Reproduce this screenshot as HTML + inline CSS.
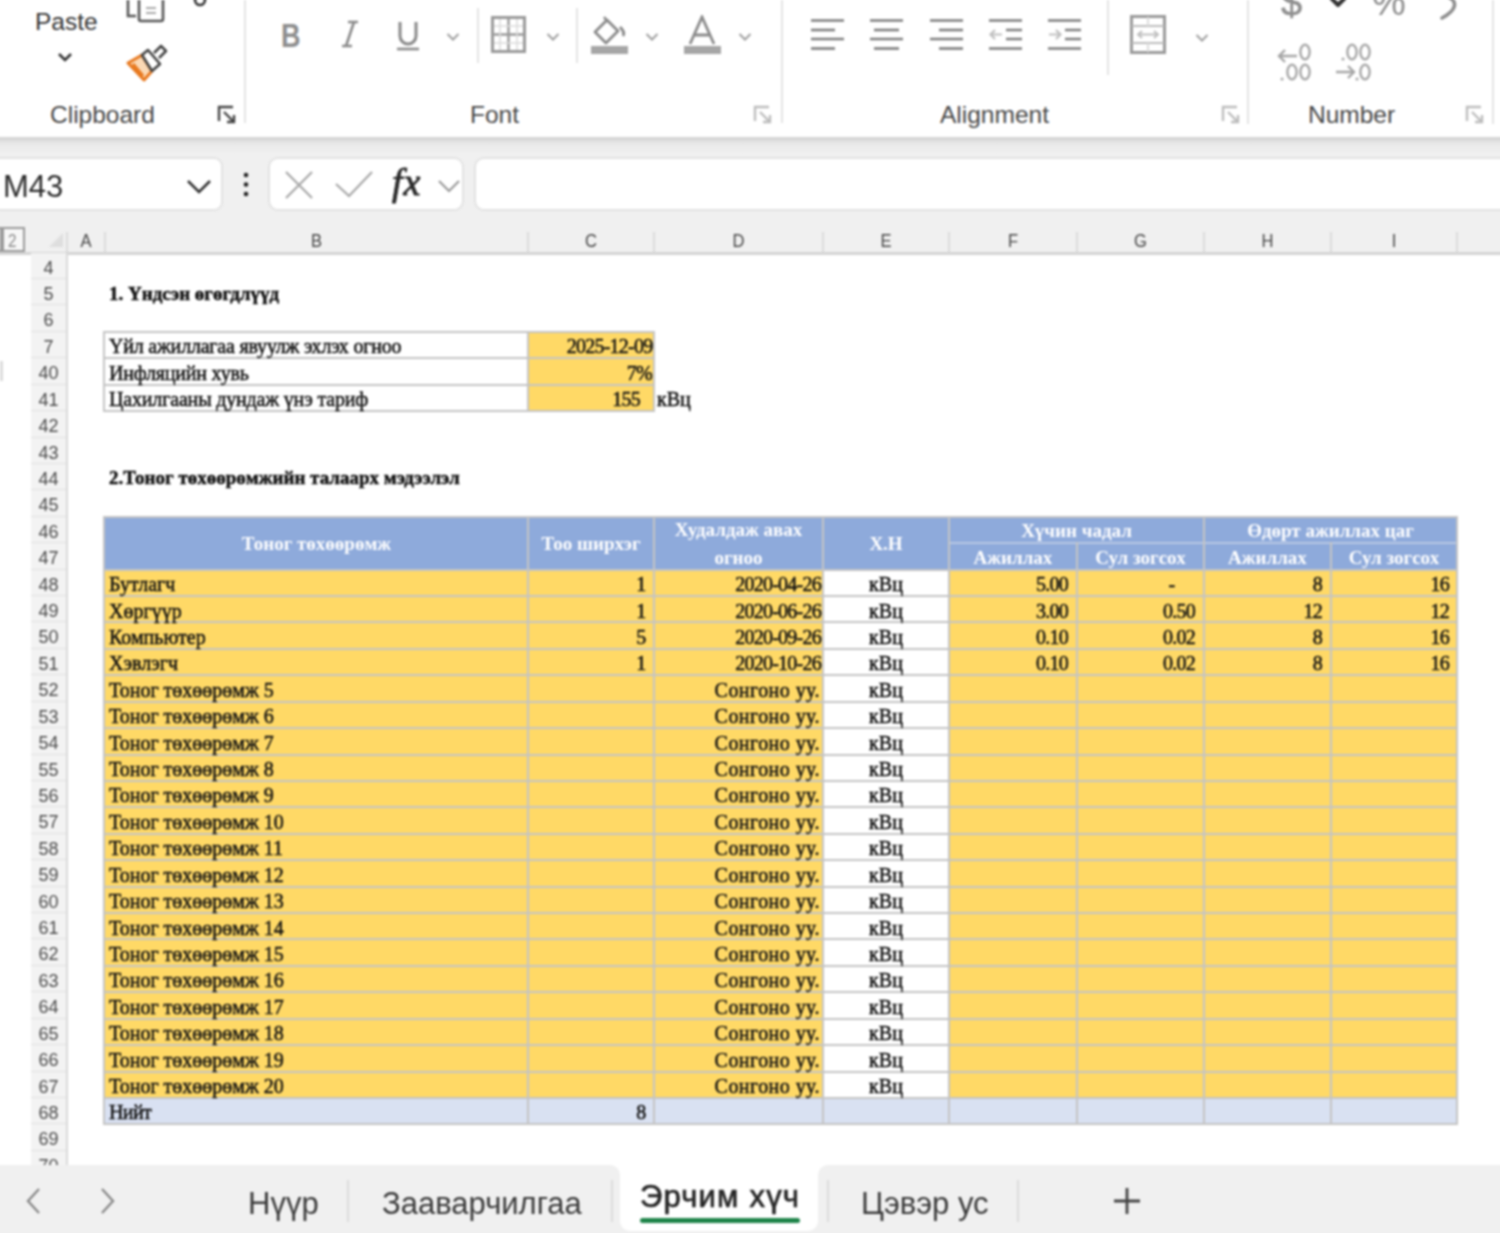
<!DOCTYPE html>
<html><head><meta charset="utf-8"><style>
*{box-sizing:border-box}
html,body{margin:0;padding:0}
body{width:1500px;height:1233px;overflow:hidden;position:relative;background:#f0f0f0;font-family:"Liberation Sans",sans-serif;}
.a{position:absolute}
.t{position:absolute;white-space:nowrap;line-height:1}
.lbl{position:absolute;white-space:nowrap;font-size:24.5px;color:#474747;line-height:1}
.cell{position:absolute;font-family:"Liberation Serif",serif;font-size:20px;color:#111;white-space:nowrap;line-height:26px;padding-top:1.5px;-webkit-text-stroke:0.5px #111;}
.hd{position:absolute;font-family:"Liberation Serif",serif;font-size:19px;font-weight:bold;color:#fff;white-space:nowrap;line-height:1;text-align:center}
.rh{position:absolute;left:30px;width:37px;text-align:center;font-size:18px;color:#4a4a4a;line-height:26px;padding-top:2px}
.ch{position:absolute;top:227px;height:26px;text-align:center;font-size:18px;color:#444;line-height:28px;transform:scaleX(0.92)}
</style></head><body><div id="wrap" style="position:absolute;left:-20px;top:-20px;width:1540px;height:1273px;overflow:hidden;filter:blur(1.1px)"><div style="position:absolute;left:20px;top:20px;width:1500px;height:1233px">

<div class="a" style="left:-20px;top:134px;width:1540px;height:24px;background:linear-gradient(#d2d2d2 0px,#d6d6d6 5px,#e4e4e4 8px,#ebebeb 12px,#f0f0f0 20px)"></div>
<div class="a" style="left:-12px;top:-12px;width:1530px;height:149px;background:#fff;border-radius:10px"></div>
<div class="a" style="left:244px;top:0;width:2px;height:123px;background:#e3e3e3"></div>
<div class="a" style="left:781px;top:0;width:2px;height:123px;background:#e3e3e3"></div>
<div class="a" style="left:1247px;top:0;width:2px;height:124px;background:#e3e3e3"></div>
<div class="a" style="left:1492px;top:0;width:2px;height:124px;background:#e3e3e3"></div>
<div class="a" style="left:477px;top:8px;width:2px;height:55px;background:#e3e3e3"></div>
<div class="a" style="left:576px;top:8px;width:2px;height:55px;background:#e3e3e3"></div>
<div class="a" style="left:1107px;top:0px;width:2px;height:75px;background:#e3e3e3"></div>
<div class="lbl" style="left:50px;top:103px">Clipboard</div>
<div class="lbl" style="left:470px;top:103px">Font</div>
<div class="lbl" style="left:940px;top:103px">Alignment</div>
<div class="lbl" style="left:1308px;top:103px">Number</div>
<svg class="a" style="left:217px;top:105px" width="20" height="20" viewBox="0 0 20 20"><path d="M2 16V2h14" fill="none" stroke="#444" stroke-width="2.4"/><path d="M7 7l10 10M17 10v7h-7" fill="none" stroke="#444" stroke-width="2.4"/></svg>
<svg class="a" style="left:753px;top:105px" width="20" height="20" viewBox="0 0 20 20"><path d="M2 16V2h14" fill="none" stroke="#bdbdbd" stroke-width="2.4"/><path d="M7 7l10 10M17 10v7h-7" fill="none" stroke="#bdbdbd" stroke-width="2.4"/></svg>
<svg class="a" style="left:1221px;top:105px" width="20" height="20" viewBox="0 0 20 20"><path d="M2 16V2h14" fill="none" stroke="#bdbdbd" stroke-width="2.4"/><path d="M7 7l10 10M17 10v7h-7" fill="none" stroke="#bdbdbd" stroke-width="2.4"/></svg>
<svg class="a" style="left:1465px;top:105px" width="20" height="20" viewBox="0 0 20 20"><path d="M2 16V2h14" fill="none" stroke="#bdbdbd" stroke-width="2.4"/><path d="M7 7l10 10M17 10v7h-7" fill="none" stroke="#bdbdbd" stroke-width="2.4"/></svg>
<div class="t" style="left:35px;top:10px;font-size:24.5px;color:#333">Paste</div>
<svg class="a" style="left:57px;top:51px" width="16" height="12" viewBox="0 0 16 12"><path d="M2 3l6 6 6-6" fill="none" stroke="#333" stroke-width="2.6"/></svg>
<svg class="a" style="left:125px;top:0" width="42" height="24" viewBox="0 0 42 24"><path d="M3 0v16h8" fill="none" stroke="#555" stroke-width="2.6"/><rect x="14" y="-4" width="24" height="25" rx="2" fill="none" stroke="#555" stroke-width="2.6"/><path d="M21 8h10M21 13h10" stroke="#aaa" stroke-width="2"/></svg>
<svg class="a" style="left:190px;top:-6px" width="20" height="16" viewBox="0 0 20 16"><circle cx="10" cy="6" r="5" fill="none" stroke="#333" stroke-width="2.6"/></svg>
<svg class="a" style="left:125px;top:42px" width="44" height="40" viewBox="0 0 44 40"><path d="M3 21L17 13 27 29 19 38Z" fill="#fbd9b5" stroke="#e8791f" stroke-width="3" stroke-linejoin="round"/><path d="M8 22l10 12" stroke="#e8791f" stroke-width="3"/><path d="M17 13l6-5 12 14-8 7z" fill="#fff" stroke="#444" stroke-width="2.6" stroke-linejoin="round"/><path d="M29 11l7-7 5 5-7 7" fill="#fff" stroke="#444" stroke-width="2.6" stroke-linejoin="round"/></svg>
<div class="t" style="left:281px;top:19px;font-size:33px;font-weight:bold;color:#8e8e8e;transform:scaleX(0.82);transform-origin:left top">B</div>
<svg class="a" style="left:340px;top:20px" width="20" height="28" viewBox="0 0 20 28"><path d="M8 2h10M2 26h10M14 2L6 26" fill="none" stroke="#8a8a8a" stroke-width="2.6"/></svg>
<svg class="a" style="left:396px;top:20px" width="24" height="32" viewBox="0 0 24 32"><path d="M4 2v14a8 8 0 0 0 16 0V2" fill="none" stroke="#8a8a8a" stroke-width="3"/><path d="M1 29h22" stroke="#8a8a8a" stroke-width="2.6"/></svg>
<svg class="a" style="left:446px;top:32px" width="14" height="10" viewBox="0 0 14 10"><path d="M1.5 2l5.5 5.5L12.5 2" fill="none" stroke="#a0a0a0" stroke-width="2"/></svg>
<svg class="a" style="left:491px;top:16px" width="35" height="37" viewBox="0 0 35 37"><rect x="1.5" y="1.5" width="32" height="34" fill="none" stroke="#9a9a9a" stroke-width="3"/><path d="M17.5 2v33M2 18.5h31" stroke="#9a9a9a" stroke-width="2.4"/><path d="M9 3v31M26 3v31M3 10h29M3 27h29" stroke="#dcdcdc" stroke-width="1.5"/></svg>
<svg class="a" style="left:546px;top:32px" width="14" height="10" viewBox="0 0 14 10"><path d="M1.5 2l5.5 5.5L12.5 2" fill="none" stroke="#a0a0a0" stroke-width="2"/></svg>
<svg class="a" style="left:590px;top:15px" width="40" height="40" viewBox="0 0 40 40"><path d="M5 17L17 5 28 16 16 28Z" fill="none" stroke="#8a8a8a" stroke-width="2.8" stroke-linejoin="round"/><path d="M14 2l4 5" stroke="#8a8a8a" stroke-width="2.6"/><path d="M30 12c3 3 5 6 3 9" fill="none" stroke="#8a8a8a" stroke-width="3"/><rect x="1" y="31" width="37" height="8" fill="#a6a6a6"/></svg>
<svg class="a" style="left:645px;top:32px" width="14" height="10" viewBox="0 0 14 10"><path d="M1.5 2l5.5 5.5L12.5 2" fill="none" stroke="#a0a0a0" stroke-width="2"/></svg>
<svg class="a" style="left:683px;top:15px" width="40" height="40" viewBox="0 0 40 40"><path d="M7 29L19 2 31 29M11 20h16" fill="none" stroke="#8a8a8a" stroke-width="2.8"/><rect x="1" y="31" width="37" height="8" fill="#a6a6a6"/></svg>
<svg class="a" style="left:738px;top:32px" width="14" height="10" viewBox="0 0 14 10"><path d="M1.5 2l5.5 5.5L12.5 2" fill="none" stroke="#a0a0a0" stroke-width="2"/></svg>
<svg class="a" style="left:810px;top:17px" width="36" height="36" viewBox="0 0 36 36"><path d="M1 3.5h33" stroke="#7e7e7e" stroke-width="2.6"/><path d="M1 13h24" stroke="#7e7e7e" stroke-width="2.6"/><path d="M1 22h33" stroke="#7e7e7e" stroke-width="2.6"/><path d="M1 31.5h24" stroke="#7e7e7e" stroke-width="2.6"/></svg>
<svg class="a" style="left:869px;top:17px" width="36" height="36" viewBox="0 0 36 36"><path d="M1 3.5h33" stroke="#7e7e7e" stroke-width="2.6"/><path d="M5 13h25" stroke="#7e7e7e" stroke-width="2.6"/><path d="M1 22h33" stroke="#7e7e7e" stroke-width="2.6"/><path d="M5 31.5h25" stroke="#7e7e7e" stroke-width="2.6"/></svg>
<svg class="a" style="left:929px;top:17px" width="36" height="36" viewBox="0 0 36 36"><path d="M1 3.5h33" stroke="#7e7e7e" stroke-width="2.6"/><path d="M10 13h24" stroke="#7e7e7e" stroke-width="2.6"/><path d="M1 22h33" stroke="#7e7e7e" stroke-width="2.6"/><path d="M10 31.5h24" stroke="#7e7e7e" stroke-width="2.6"/></svg>
<svg class="a" style="left:988px;top:17px" width="36" height="36" viewBox="0 0 36 36"><path d="M1 3.5h33M18 13h16M18 22h16M1 31.5h33" stroke="#7e7e7e" stroke-width="2.6"/><path d="M14 17.5H3M7 13l-4.5 4.5L7 22" fill="none" stroke="#c0c0c0" stroke-width="2.2"/></svg>
<svg class="a" style="left:1047px;top:17px" width="36" height="36" viewBox="0 0 36 36"><path d="M1 3.5h33M18 13h16M18 22h16M1 31.5h33" stroke="#7e7e7e" stroke-width="2.6"/><path d="M2 17.5h11M9 13l4.5 4.5L9 22" fill="none" stroke="#c0c0c0" stroke-width="2.2"/></svg>
<svg class="a" style="left:1130px;top:15px" width="36" height="39" viewBox="0 0 36 39"><rect x="1.5" y="1.5" width="33" height="36" fill="none" stroke="#9a9a9a" stroke-width="3"/><path d="M2 11h32M2 28h32" stroke="#bdbdbd" stroke-width="2"/><path d="M18 2v9M18 28v9" stroke="#dcdcdc" stroke-width="2"/><path d="M9 19.5h18M12 16l-4 3.5 4 3.5M24 16l4 3.5-4 3.5" fill="none" stroke="#c0c0c0" stroke-width="2"/></svg>
<svg class="a" style="left:1195px;top:33px" width="14" height="10" viewBox="0 0 14 10"><path d="M1.5 2l5.5 5.5L12.5 2" fill="none" stroke="#a0a0a0" stroke-width="2"/></svg>
<div class="t" style="left:1281px;top:-16px;font-size:38px;color:#8e8e8e;-webkit-text-stroke:0.5px #8e8e8e">$</div>
<svg class="a" style="left:1328px;top:-6px" width="20" height="16" viewBox="0 0 20 16"><path d="M3 4l7 7 7-7" fill="none" stroke="#333" stroke-width="4" stroke-linejoin="round"/></svg>
<div class="t" style="left:1372px;top:-17px;font-size:38px;color:#8e8e8e">%</div>
<svg class="a" style="left:1436px;top:-2px" width="24" height="24" viewBox="0 0 24 24"><path d="M14 0c7 4 7 12 -8 20" fill="none" stroke="#8e8e8e" stroke-width="3.6" stroke-linecap="round"/></svg>
<svg class="a" style="left:1270px;top:40px" width="110" height="46" viewBox="1270 40 110 46"><g fill="none" stroke="#a6a6a6" stroke-width="2.4"><ellipse cx="1305" cy="52" rx="4.6" ry="7.4"/><ellipse cx="1292" cy="72" rx="4.6" ry="7.4"/><ellipse cx="1305" cy="72" rx="4.6" ry="7.4"/><path d="M1297 56h-18M1285 50l-6 6 6 6"/><ellipse cx="1352" cy="52" rx="4.6" ry="7.4"/><ellipse cx="1365" cy="52" rx="4.6" ry="7.4"/><ellipse cx="1365" cy="72" rx="4.6" ry="7.4"/><path d="M1336 72h17M1348 66l6 6-6 6"/></g><g fill="#a6a6a6"><circle cx="1282" cy="79" r="1.5"/><circle cx="1343" cy="59" r="1.5"/><circle cx="1357" cy="79" r="1.5"/></g></svg>
<div class="a" style="left:-10px;top:157px;width:233px;height:54px;background:#fff;border:2px solid #e2e2e2;border-radius:9px"></div>
<div class="t" style="left:3px;top:171px;font-size:31px;color:#2b2b2b">M43</div>
<svg class="a" style="left:186px;top:178px" width="26" height="16" viewBox="0 0 26 16"><path d="M2 3l11 11L24 3" fill="none" stroke="#333" stroke-width="2.6"/></svg>
<svg class="a" style="left:241px;top:168px" width="10" height="32" viewBox="0 0 10 32"><circle cx="5" cy="7" r="2.3" fill="#222"/><circle cx="5" cy="16.5" r="2.3" fill="#222"/><circle cx="5" cy="26" r="2.3" fill="#222"/></svg>
<div class="a" style="left:268px;top:157px;width:196px;height:54px;background:#fff;border:2px solid #e2e2e2;border-radius:10px"></div>
<svg class="a" style="left:284px;top:170px" width="30" height="30" viewBox="0 0 30 30"><path d="M2 2l26 26M28 2L2 28" stroke="#a8a8a8" stroke-width="2.2"/></svg>
<svg class="a" style="left:334px;top:169px" width="40" height="30" viewBox="0 0 40 30"><path d="M2 15l13 12L38 3" fill="none" stroke="#a8a8a8" stroke-width="2.2"/></svg>
<div class="t" style="left:392px;top:163px;font-family:'Liberation Serif',serif;font-style:italic;font-size:38px;color:#2a2a2a;-webkit-text-stroke:0.9px #2a2a2a;letter-spacing:1px">fx</div>
<svg class="a" style="left:437px;top:178px" width="24" height="16" viewBox="0 0 24 16"><path d="M2 3l10 10L22 3" fill="none" stroke="#9a9a9a" stroke-width="2.2"/></svg>
<div class="a" style="left:474px;top:157px;width:1060px;height:54px;background:#fff;border:2px solid #e2e2e2;border-radius:10px"></div>
<div class="a" style="left:-20px;top:252px;width:1540px;height:3px;background:#d4d4d4"></div>
<div class="a" style="left:-3px;top:227px;width:28px;height:25px;border:2px solid #9a9a9a;background:#f7f7f7"></div>
<div class="a" style="left:0;top:228px;width:4px;height:24px;background:#9a9a9a"></div>
<div class="t" style="left:7.5px;top:232px;font-size:18px;color:#8a8a8a;transform:scaleX(0.85);transform-origin:left top">2</div>
<svg class="a" style="left:47px;top:231px" width="18" height="18" viewBox="0 0 18 18"><path d="M16 2V16H2Z" fill="#dedede"/></svg>
<div class="a" style="left:104px;top:232px;width:2px;height:20px;background:#dcdcdc"></div>
<div class="ch" style="left:67px;width:38px">A</div>
<div class="a" style="left:527px;top:232px;width:2px;height:20px;background:#dcdcdc"></div>
<div class="ch" style="left:105px;width:423px">B</div>
<div class="a" style="left:653px;top:232px;width:2px;height:20px;background:#dcdcdc"></div>
<div class="ch" style="left:528px;width:126px">C</div>
<div class="a" style="left:822px;top:232px;width:2px;height:20px;background:#dcdcdc"></div>
<div class="ch" style="left:654px;width:169px">D</div>
<div class="a" style="left:948px;top:232px;width:2px;height:20px;background:#dcdcdc"></div>
<div class="ch" style="left:823px;width:126px">E</div>
<div class="a" style="left:1076px;top:232px;width:2px;height:20px;background:#dcdcdc"></div>
<div class="ch" style="left:949px;width:128px">F</div>
<div class="a" style="left:1203px;top:232px;width:2px;height:20px;background:#dcdcdc"></div>
<div class="ch" style="left:1077px;width:127px">G</div>
<div class="a" style="left:1330px;top:232px;width:2px;height:20px;background:#dcdcdc"></div>
<div class="ch" style="left:1204px;width:127px">H</div>
<div class="a" style="left:1456px;top:232px;width:2px;height:20px;background:#dcdcdc"></div>
<div class="ch" style="left:1331px;width:126px">I</div>
<div class="a" style="left:1599px;top:232px;width:2px;height:20px;background:#dcdcdc"></div>
<div class="a" style="left:66px;top:232px;width:2px;height:20px;background:#dcdcdc"></div>
<div class="a" style="left:-20px;top:255px;width:1540px;height:910px;background:#fff"></div>
<div class="a" style="left:31px;top:253px;width:36px;height:912px;background:#f3f3f3"></div>
<div class="a" style="left:66px;top:253px;width:2px;height:912px;background:#d9d9d9"></div>
<div class="a" style="left:0;top:361px;width:3px;height:20px;background:#dcdcdc"></div>
<div class="rh" style="top:252.6px">4</div>
<div class="a" style="left:31px;top:278.0px;width:35px;height:1px;background:#e0e0e0"></div>
<div class="rh" style="top:279.0px">5</div>
<div class="a" style="left:31px;top:304.4px;width:35px;height:1px;background:#e0e0e0"></div>
<div class="rh" style="top:305.4px">6</div>
<div class="a" style="left:31px;top:330.8px;width:35px;height:1px;background:#e0e0e0"></div>
<div class="rh" style="top:331.8px">7</div>
<div class="a" style="left:31px;top:357.3px;width:35px;height:1px;background:#e0e0e0"></div>
<div class="rh" style="top:358.3px">40</div>
<div class="a" style="left:31px;top:383.7px;width:35px;height:1px;background:#e0e0e0"></div>
<div class="rh" style="top:384.7px">41</div>
<div class="a" style="left:31px;top:410.1px;width:35px;height:1px;background:#e0e0e0"></div>
<div class="rh" style="top:411.1px">42</div>
<div class="a" style="left:31px;top:436.5px;width:35px;height:1px;background:#e0e0e0"></div>
<div class="rh" style="top:437.5px">43</div>
<div class="a" style="left:31px;top:462.9px;width:35px;height:1px;background:#e0e0e0"></div>
<div class="rh" style="top:463.9px">44</div>
<div class="a" style="left:31px;top:489.3px;width:35px;height:1px;background:#e0e0e0"></div>
<div class="rh" style="top:490.3px">45</div>
<div class="a" style="left:31px;top:515.8px;width:35px;height:1px;background:#e0e0e0"></div>
<div class="rh" style="top:516.8px">46</div>
<div class="a" style="left:31px;top:542.2px;width:35px;height:1px;background:#e0e0e0"></div>
<div class="rh" style="top:543.2px">47</div>
<div class="a" style="left:31px;top:568.6px;width:35px;height:1px;background:#e0e0e0"></div>
<div class="rh" style="top:569.6px">48</div>
<div class="a" style="left:31px;top:595.0px;width:35px;height:1px;background:#e0e0e0"></div>
<div class="rh" style="top:596.0px">49</div>
<div class="a" style="left:31px;top:621.4px;width:35px;height:1px;background:#e0e0e0"></div>
<div class="rh" style="top:622.4px">50</div>
<div class="a" style="left:31px;top:647.8px;width:35px;height:1px;background:#e0e0e0"></div>
<div class="rh" style="top:648.8px">51</div>
<div class="a" style="left:31px;top:674.2px;width:35px;height:1px;background:#e0e0e0"></div>
<div class="rh" style="top:675.2px">52</div>
<div class="a" style="left:31px;top:700.7px;width:35px;height:1px;background:#e0e0e0"></div>
<div class="rh" style="top:701.7px">53</div>
<div class="a" style="left:31px;top:727.1px;width:35px;height:1px;background:#e0e0e0"></div>
<div class="rh" style="top:728.1px">54</div>
<div class="a" style="left:31px;top:753.5px;width:35px;height:1px;background:#e0e0e0"></div>
<div class="rh" style="top:754.5px">55</div>
<div class="a" style="left:31px;top:779.9px;width:35px;height:1px;background:#e0e0e0"></div>
<div class="rh" style="top:780.9px">56</div>
<div class="a" style="left:31px;top:806.3px;width:35px;height:1px;background:#e0e0e0"></div>
<div class="rh" style="top:807.3px">57</div>
<div class="a" style="left:31px;top:832.7px;width:35px;height:1px;background:#e0e0e0"></div>
<div class="rh" style="top:833.7px">58</div>
<div class="a" style="left:31px;top:859.1px;width:35px;height:1px;background:#e0e0e0"></div>
<div class="rh" style="top:860.1px">59</div>
<div class="a" style="left:31px;top:885.6px;width:35px;height:1px;background:#e0e0e0"></div>
<div class="rh" style="top:886.6px">60</div>
<div class="a" style="left:31px;top:912.0px;width:35px;height:1px;background:#e0e0e0"></div>
<div class="rh" style="top:913.0px">61</div>
<div class="a" style="left:31px;top:938.4px;width:35px;height:1px;background:#e0e0e0"></div>
<div class="rh" style="top:939.4px">62</div>
<div class="a" style="left:31px;top:964.8px;width:35px;height:1px;background:#e0e0e0"></div>
<div class="rh" style="top:965.8px">63</div>
<div class="a" style="left:31px;top:991.2px;width:35px;height:1px;background:#e0e0e0"></div>
<div class="rh" style="top:992.2px">64</div>
<div class="a" style="left:31px;top:1017.6px;width:35px;height:1px;background:#e0e0e0"></div>
<div class="rh" style="top:1018.6px">65</div>
<div class="a" style="left:31px;top:1044.0px;width:35px;height:1px;background:#e0e0e0"></div>
<div class="rh" style="top:1045.0px">66</div>
<div class="a" style="left:31px;top:1070.5px;width:35px;height:1px;background:#e0e0e0"></div>
<div class="rh" style="top:1071.5px">67</div>
<div class="a" style="left:31px;top:1096.9px;width:35px;height:1px;background:#e0e0e0"></div>
<div class="rh" style="top:1097.9px">68</div>
<div class="a" style="left:31px;top:1123.3px;width:35px;height:1px;background:#e0e0e0"></div>
<div class="rh" style="top:1124.3px">69</div>
<div class="a" style="left:31px;top:1149.7px;width:35px;height:1px;background:#e0e0e0"></div>
<div class="rh" style="top:1150.7px">70</div>
<div class="a" style="left:31px;top:1176.1px;width:35px;height:1px;background:#e0e0e0"></div>
<div class="cell" style="top:279.0px;height:26.4px;left:109px;font-weight:bold;font-size:19px;">1. Үндсэн өгөгдлүүд</div>
<div class="a" style="left:528px;top:331.8px;width:126px;height:79.2px;background:#ffd966"></div>
<div class="a" style="left:103px;top:330.8px;width:552px;height:2px;background:#c4c4c4"></div>
<div class="a" style="left:103px;top:357.3px;width:552px;height:2px;background:#c4c4c4"></div>
<div class="a" style="left:103px;top:383.7px;width:552px;height:2px;background:#c4c4c4"></div>
<div class="a" style="left:103px;top:410.1px;width:552px;height:2px;background:#c4c4c4"></div>
<div class="a" style="left:103px;top:330.8px;width:2px;height:81.2px;background:#c4c4c4"></div>
<div class="a" style="left:527px;top:330.8px;width:2px;height:81.2px;background:#c4c4c4"></div>
<div class="a" style="left:653px;top:330.8px;width:2px;height:81.2px;background:#c4c4c4"></div>
<div class="cell" style="top:331.8px;height:26.4px;left:109px;letter-spacing:-0.2px;">Үйл ажиллагаа явуулж эхлэх огноо</div>
<div class="cell" style="top:358.3px;height:26.4px;left:109px;letter-spacing:-0.2px;">Инфляцийн хувь</div>
<div class="cell" style="top:384.7px;height:26.4px;left:109px;letter-spacing:-0.17px;">Цахилгааны дундаж үнэ тариф</div>
<div class="cell" style="top:331.8px;height:26.4px;left:528px;width:124.5px;text-align:right;letter-spacing:-0.75px;">2025-12-09</div>
<div class="cell" style="top:358.3px;height:26.4px;left:528px;width:124px;text-align:right;letter-spacing:-0.75px;">7%</div>
<div class="cell" style="top:384.7px;height:26.4px;left:528px;width:112px;text-align:right;letter-spacing:-0.75px;">155</div>
<div class="cell" style="top:384.7px;height:26.4px;left:657px;">кВц</div>
<div class="cell" style="top:463.9px;height:26.4px;left:109px;font-weight:bold;font-size:19px;">2.Тоног төхөөрөмжийн талаарх мэдээлэл</div>
<div class="a" style="left:104px;top:516.8px;width:1353px;height:52.8px;background:#8eaadb"></div>
<div class="a" style="left:104px;top:569.6px;width:1353px;height:528.3px;background:#ffd966"></div>
<div class="a" style="left:823px;top:569.6px;width:126px;height:528.3px;background:#fff"></div>
<div class="a" style="left:104px;top:1097.9px;width:1353px;height:26.4px;background:#d9e1f2"></div>
<div class="a" style="left:103px;top:568.6px;width:1355px;height:2px;background:#c4c4c4"></div>
<div class="a" style="left:103px;top:595.0px;width:1355px;height:2px;background:#c4c4c4"></div>
<div class="a" style="left:103px;top:621.4px;width:1355px;height:2px;background:#c4c4c4"></div>
<div class="a" style="left:103px;top:647.8px;width:1355px;height:2px;background:#c4c4c4"></div>
<div class="a" style="left:103px;top:674.2px;width:1355px;height:2px;background:#c4c4c4"></div>
<div class="a" style="left:103px;top:700.7px;width:1355px;height:2px;background:#c4c4c4"></div>
<div class="a" style="left:103px;top:727.1px;width:1355px;height:2px;background:#c4c4c4"></div>
<div class="a" style="left:103px;top:753.5px;width:1355px;height:2px;background:#c4c4c4"></div>
<div class="a" style="left:103px;top:779.9px;width:1355px;height:2px;background:#c4c4c4"></div>
<div class="a" style="left:103px;top:806.3px;width:1355px;height:2px;background:#c4c4c4"></div>
<div class="a" style="left:103px;top:832.7px;width:1355px;height:2px;background:#c4c4c4"></div>
<div class="a" style="left:103px;top:859.1px;width:1355px;height:2px;background:#c4c4c4"></div>
<div class="a" style="left:103px;top:885.6px;width:1355px;height:2px;background:#c4c4c4"></div>
<div class="a" style="left:103px;top:912.0px;width:1355px;height:2px;background:#c4c4c4"></div>
<div class="a" style="left:103px;top:938.4px;width:1355px;height:2px;background:#c4c4c4"></div>
<div class="a" style="left:103px;top:964.8px;width:1355px;height:2px;background:#c4c4c4"></div>
<div class="a" style="left:103px;top:991.2px;width:1355px;height:2px;background:#c4c4c4"></div>
<div class="a" style="left:103px;top:1017.6px;width:1355px;height:2px;background:#c4c4c4"></div>
<div class="a" style="left:103px;top:1044.0px;width:1355px;height:2px;background:#c4c4c4"></div>
<div class="a" style="left:103px;top:1070.5px;width:1355px;height:2px;background:#c4c4c4"></div>
<div class="a" style="left:103px;top:1096.9px;width:1355px;height:2px;background:#c4c4c4"></div>
<div class="a" style="left:103px;top:1123.3px;width:1355px;height:2px;background:#c4c4c4"></div>
<div class="a" style="left:103px;top:515.8px;width:1355px;height:2px;background:#c4c4c4"></div>
<div class="a" style="left:948px;top:542.2px;width:510px;height:2px;background:#b7c7e4"></div>
<div class="a" style="left:103px;top:515.8px;width:2px;height:609.5px;background:#c4c4c4"></div>
<div class="a" style="left:527px;top:515.8px;width:2px;height:609.5px;background:#c4c4c4"></div>
<div class="a" style="left:653px;top:515.8px;width:2px;height:609.5px;background:#c4c4c4"></div>
<div class="a" style="left:822px;top:515.8px;width:2px;height:609.5px;background:#c4c4c4"></div>
<div class="a" style="left:948px;top:515.8px;width:2px;height:609.5px;background:#c4c4c4"></div>
<div class="a" style="left:1203px;top:515.8px;width:2px;height:609.5px;background:#c4c4c4"></div>
<div class="a" style="left:1456px;top:515.8px;width:2px;height:609.5px;background:#c4c4c4"></div>
<div class="a" style="left:1076px;top:542.2px;width:2px;height:583.1px;background:#c4c4c4"></div>
<div class="a" style="left:1330px;top:542.2px;width:2px;height:583.1px;background:#c4c4c4"></div>
<div class="hd" style="left:105px;width:423px;top:533.7px">Тоног төхөөрөмж</div>
<div class="hd" style="left:528px;width:126px;top:533.7px">Тоо ширхэг</div>
<div class="hd" style="left:654px;width:169px;top:519.5px">Худалдаж авах</div>
<div class="hd" style="left:654px;width:169px;top:547.9px">огноо</div>
<div class="hd" style="left:823px;width:126px;top:533.7px">Х.Н</div>
<div class="hd" style="left:949px;width:255px;top:520.5px">Хүчин чадал</div>
<div class="hd" style="left:1204px;width:253px;top:520.5px">Өдөрт ажиллах цаг</div>
<div class="hd" style="left:949px;width:128px;top:547.9px">Ажиллах</div>
<div class="hd" style="left:1077px;width:127px;top:547.9px">Сул зогсох</div>
<div class="hd" style="left:1204px;width:127px;top:547.9px">Ажиллах</div>
<div class="hd" style="left:1331px;width:126px;top:547.9px">Сул зогсох</div>
<div class="cell" style="top:569.6px;height:26.4px;left:109px;">Бутлагч</div>
<div class="cell" style="top:569.6px;height:26.4px;left:528px;width:117.5px;text-align:right;letter-spacing:-0.75px;">1</div>
<div class="cell" style="top:569.6px;height:26.4px;left:654px;width:167px;text-align:right;letter-spacing:-0.75px;">2020-04-26</div>
<div class="cell" style="top:569.6px;height:26.4px;left:823px;width:126px;text-align:center;">кВц</div>
<div class="cell" style="top:569.6px;height:26.4px;left:949px;width:119px;text-align:right;letter-spacing:-0.75px;">5.00</div>
<div class="cell" style="top:569.6px;height:26.4px;left:1077px;width:97.5px;text-align:right;letter-spacing:-0.75px;">-</div>
<div class="cell" style="top:569.6px;height:26.4px;left:1204px;width:118px;text-align:right;letter-spacing:-0.75px;">8</div>
<div class="cell" style="top:569.6px;height:26.4px;left:1331px;width:118px;text-align:right;letter-spacing:-0.75px;">16</div>
<div class="cell" style="top:596.0px;height:26.4px;left:109px;">Хөргүүр</div>
<div class="cell" style="top:596.0px;height:26.4px;left:528px;width:117.5px;text-align:right;letter-spacing:-0.75px;">1</div>
<div class="cell" style="top:596.0px;height:26.4px;left:654px;width:167px;text-align:right;letter-spacing:-0.75px;">2020-06-26</div>
<div class="cell" style="top:596.0px;height:26.4px;left:823px;width:126px;text-align:center;">кВц</div>
<div class="cell" style="top:596.0px;height:26.4px;left:949px;width:119px;text-align:right;letter-spacing:-0.75px;">3.00</div>
<div class="cell" style="top:596.0px;height:26.4px;left:1077px;width:118px;text-align:right;letter-spacing:-0.75px;">0.50</div>
<div class="cell" style="top:596.0px;height:26.4px;left:1204px;width:118px;text-align:right;letter-spacing:-0.75px;">12</div>
<div class="cell" style="top:596.0px;height:26.4px;left:1331px;width:118px;text-align:right;letter-spacing:-0.75px;">12</div>
<div class="cell" style="top:622.4px;height:26.4px;left:109px;">Компьютер</div>
<div class="cell" style="top:622.4px;height:26.4px;left:528px;width:117.5px;text-align:right;letter-spacing:-0.75px;">5</div>
<div class="cell" style="top:622.4px;height:26.4px;left:654px;width:167px;text-align:right;letter-spacing:-0.75px;">2020-09-26</div>
<div class="cell" style="top:622.4px;height:26.4px;left:823px;width:126px;text-align:center;">кВц</div>
<div class="cell" style="top:622.4px;height:26.4px;left:949px;width:119px;text-align:right;letter-spacing:-0.75px;">0.10</div>
<div class="cell" style="top:622.4px;height:26.4px;left:1077px;width:118px;text-align:right;letter-spacing:-0.75px;">0.02</div>
<div class="cell" style="top:622.4px;height:26.4px;left:1204px;width:118px;text-align:right;letter-spacing:-0.75px;">8</div>
<div class="cell" style="top:622.4px;height:26.4px;left:1331px;width:118px;text-align:right;letter-spacing:-0.75px;">16</div>
<div class="cell" style="top:648.8px;height:26.4px;left:109px;">Хэвлэгч</div>
<div class="cell" style="top:648.8px;height:26.4px;left:528px;width:117.5px;text-align:right;letter-spacing:-0.75px;">1</div>
<div class="cell" style="top:648.8px;height:26.4px;left:654px;width:167px;text-align:right;letter-spacing:-0.75px;">2020-10-26</div>
<div class="cell" style="top:648.8px;height:26.4px;left:823px;width:126px;text-align:center;">кВц</div>
<div class="cell" style="top:648.8px;height:26.4px;left:949px;width:119px;text-align:right;letter-spacing:-0.75px;">0.10</div>
<div class="cell" style="top:648.8px;height:26.4px;left:1077px;width:118px;text-align:right;letter-spacing:-0.75px;">0.02</div>
<div class="cell" style="top:648.8px;height:26.4px;left:1204px;width:118px;text-align:right;letter-spacing:-0.75px;">8</div>
<div class="cell" style="top:648.8px;height:26.4px;left:1331px;width:118px;text-align:right;letter-spacing:-0.75px;">16</div>
<div class="cell" style="top:675.2px;height:26.4px;left:109px;">Тоног төхөөрөмж 5</div>
<div class="cell" style="top:675.2px;height:26.4px;left:654px;width:166px;text-align:right;letter-spacing:0.45px;">Сонгоно уу.</div>
<div class="cell" style="top:675.2px;height:26.4px;left:823px;width:126px;text-align:center;">кВц</div>
<div class="cell" style="top:701.7px;height:26.4px;left:109px;">Тоног төхөөрөмж 6</div>
<div class="cell" style="top:701.7px;height:26.4px;left:654px;width:166px;text-align:right;letter-spacing:0.45px;">Сонгоно уу.</div>
<div class="cell" style="top:701.7px;height:26.4px;left:823px;width:126px;text-align:center;">кВц</div>
<div class="cell" style="top:728.1px;height:26.4px;left:109px;">Тоног төхөөрөмж 7</div>
<div class="cell" style="top:728.1px;height:26.4px;left:654px;width:166px;text-align:right;letter-spacing:0.45px;">Сонгоно уу.</div>
<div class="cell" style="top:728.1px;height:26.4px;left:823px;width:126px;text-align:center;">кВц</div>
<div class="cell" style="top:754.5px;height:26.4px;left:109px;">Тоног төхөөрөмж 8</div>
<div class="cell" style="top:754.5px;height:26.4px;left:654px;width:166px;text-align:right;letter-spacing:0.45px;">Сонгоно уу.</div>
<div class="cell" style="top:754.5px;height:26.4px;left:823px;width:126px;text-align:center;">кВц</div>
<div class="cell" style="top:780.9px;height:26.4px;left:109px;">Тоног төхөөрөмж 9</div>
<div class="cell" style="top:780.9px;height:26.4px;left:654px;width:166px;text-align:right;letter-spacing:0.45px;">Сонгоно уу.</div>
<div class="cell" style="top:780.9px;height:26.4px;left:823px;width:126px;text-align:center;">кВц</div>
<div class="cell" style="top:807.3px;height:26.4px;left:109px;">Тоног төхөөрөмж 10</div>
<div class="cell" style="top:807.3px;height:26.4px;left:654px;width:166px;text-align:right;letter-spacing:0.45px;">Сонгоно уу.</div>
<div class="cell" style="top:807.3px;height:26.4px;left:823px;width:126px;text-align:center;">кВц</div>
<div class="cell" style="top:833.7px;height:26.4px;left:109px;">Тоног төхөөрөмж 11</div>
<div class="cell" style="top:833.7px;height:26.4px;left:654px;width:166px;text-align:right;letter-spacing:0.45px;">Сонгоно уу.</div>
<div class="cell" style="top:833.7px;height:26.4px;left:823px;width:126px;text-align:center;">кВц</div>
<div class="cell" style="top:860.1px;height:26.4px;left:109px;">Тоног төхөөрөмж 12</div>
<div class="cell" style="top:860.1px;height:26.4px;left:654px;width:166px;text-align:right;letter-spacing:0.45px;">Сонгоно уу.</div>
<div class="cell" style="top:860.1px;height:26.4px;left:823px;width:126px;text-align:center;">кВц</div>
<div class="cell" style="top:886.6px;height:26.4px;left:109px;">Тоног төхөөрөмж 13</div>
<div class="cell" style="top:886.6px;height:26.4px;left:654px;width:166px;text-align:right;letter-spacing:0.45px;">Сонгоно уу.</div>
<div class="cell" style="top:886.6px;height:26.4px;left:823px;width:126px;text-align:center;">кВц</div>
<div class="cell" style="top:913.0px;height:26.4px;left:109px;">Тоног төхөөрөмж 14</div>
<div class="cell" style="top:913.0px;height:26.4px;left:654px;width:166px;text-align:right;letter-spacing:0.45px;">Сонгоно уу.</div>
<div class="cell" style="top:913.0px;height:26.4px;left:823px;width:126px;text-align:center;">кВц</div>
<div class="cell" style="top:939.4px;height:26.4px;left:109px;">Тоног төхөөрөмж 15</div>
<div class="cell" style="top:939.4px;height:26.4px;left:654px;width:166px;text-align:right;letter-spacing:0.45px;">Сонгоно уу.</div>
<div class="cell" style="top:939.4px;height:26.4px;left:823px;width:126px;text-align:center;">кВц</div>
<div class="cell" style="top:965.8px;height:26.4px;left:109px;">Тоног төхөөрөмж 16</div>
<div class="cell" style="top:965.8px;height:26.4px;left:654px;width:166px;text-align:right;letter-spacing:0.45px;">Сонгоно уу.</div>
<div class="cell" style="top:965.8px;height:26.4px;left:823px;width:126px;text-align:center;">кВц</div>
<div class="cell" style="top:992.2px;height:26.4px;left:109px;">Тоног төхөөрөмж 17</div>
<div class="cell" style="top:992.2px;height:26.4px;left:654px;width:166px;text-align:right;letter-spacing:0.45px;">Сонгоно уу.</div>
<div class="cell" style="top:992.2px;height:26.4px;left:823px;width:126px;text-align:center;">кВц</div>
<div class="cell" style="top:1018.6px;height:26.4px;left:109px;">Тоног төхөөрөмж 18</div>
<div class="cell" style="top:1018.6px;height:26.4px;left:654px;width:166px;text-align:right;letter-spacing:0.45px;">Сонгоно уу.</div>
<div class="cell" style="top:1018.6px;height:26.4px;left:823px;width:126px;text-align:center;">кВц</div>
<div class="cell" style="top:1045.0px;height:26.4px;left:109px;">Тоног төхөөрөмж 19</div>
<div class="cell" style="top:1045.0px;height:26.4px;left:654px;width:166px;text-align:right;letter-spacing:0.45px;">Сонгоно уу.</div>
<div class="cell" style="top:1045.0px;height:26.4px;left:823px;width:126px;text-align:center;">кВц</div>
<div class="cell" style="top:1071.5px;height:26.4px;left:109px;">Тоног төхөөрөмж 20</div>
<div class="cell" style="top:1071.5px;height:26.4px;left:654px;width:166px;text-align:right;letter-spacing:0.45px;">Сонгоно уу.</div>
<div class="cell" style="top:1071.5px;height:26.4px;left:823px;width:126px;text-align:center;">кВц</div>
<div class="cell" style="top:1097.9px;height:26.4px;left:109px;letter-spacing:-0.6px;">Нийт</div>
<div class="cell" style="top:1097.9px;height:26.4px;left:528px;width:117.5px;text-align:right;letter-spacing:-0.75px;">8</div>
<div class="a" style="left:-20px;top:1165px;width:1540px;height:88px;background:#f0f0f0"></div>
<div class="a" style="left:600px;top:1165px;width:30px;height:20px;background:#fff"></div>
<div class="a" style="left:808px;top:1165px;width:30px;height:20px;background:#fff"></div>
<div class="a" style="left:-20px;top:1165px;width:640px;height:88px;background:#f0f0f0;border-top-right-radius:10px"></div>
<div class="a" style="left:818px;top:1165px;width:720px;height:88px;background:#f0f0f0;border-top-left-radius:10px"></div>
<div class="a" style="left:620px;top:1160px;width:198px;height:71px;background:#fff;border-radius:0 0 10px 10px"></div>
<svg class="a" style="left:24px;top:1187px" width="20" height="28" viewBox="0 0 20 28"><path d="M15 2L4 14l11 12" fill="none" stroke="#8a8a8a" stroke-width="2.4"/></svg>
<svg class="a" style="left:97px;top:1187px" width="20" height="28" viewBox="0 0 20 28"><path d="M5 2l11 12L5 26" fill="none" stroke="#8a8a8a" stroke-width="2.4"/></svg>
<div class="t" style="left:248px;top:1187.5px;font-size:31px;color:#3a3a3a">Нүүр</div>
<div class="t" style="left:382px;top:1187.5px;font-size:31px;color:#3a3a3a">Зааварчилгаа</div>
<div class="t" style="left:640px;top:1181px;font-size:31px;color:#262626;letter-spacing:1.2px;-webkit-text-stroke:0.7px #262626">Эрчим хүч</div>
<div class="a" style="left:640px;top:1218px;width:160px;height:5px;background:#1e8449;border-radius:2.5px"></div>
<div class="t" style="left:861px;top:1187.5px;font-size:31px;color:#3a3a3a">Цэвэр ус</div>
<div class="a" style="left:347px;top:1180px;width:2px;height:42px;background:#dcdcdc"></div>
<div class="a" style="left:611px;top:1180px;width:2px;height:42px;background:#dcdcdc"></div>
<div class="a" style="left:827px;top:1180px;width:2px;height:42px;background:#dcdcdc"></div>
<div class="a" style="left:1017px;top:1180px;width:2px;height:42px;background:#dcdcdc"></div>
<svg class="a" style="left:1112px;top:1186px" width="30" height="30" viewBox="0 0 30 30"><path d="M15 2v26M2 15h26" stroke="#444" stroke-width="2.8"/></svg>
</div></div></body></html>
